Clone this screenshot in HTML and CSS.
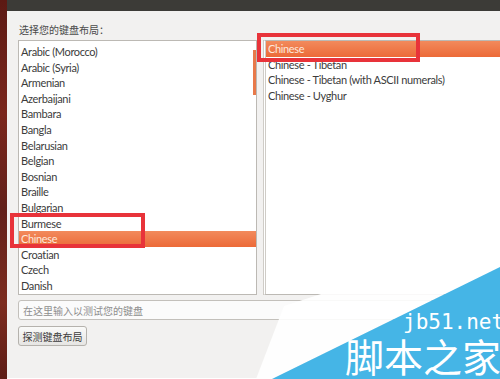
FILE: index.html
```html
<!DOCTYPE html>
<html lang="zh-CN">
<head>
    <meta charset="UTF-8">
    <title>键盘布局</title>
    <link rel="stylesheet" href="styles.css">
</head>
<body>
    <div class="screen">
        <div class="strip"></div>
        <div class="window">
            <div class="titlebar"></div>
            <div class="content">
                <p class="label">选择您的键盘布局：</p>
                <div class="lists">
                    <div class="list list-left">
                        <div class="row">Arabic (Morocco)</div>
                        <div class="row">Arabic (Syria)</div>
                        <div class="row">Armenian</div>
                        <div class="row">Azerbaijani</div>
                        <div class="row">Bambara</div>
                        <div class="row">Bangla</div>
                        <div class="row">Belarusian</div>
                        <div class="row">Belgian</div>
                        <div class="row">Bosnian</div>
                        <div class="row">Braille</div>
                        <div class="row">Bulgarian</div>
                        <div class="row">Burmese</div>
                        <div class="row selected">Chinese</div>
                        <div class="row">Croatian</div>
                        <div class="row">Czech</div>
                        <div class="row">Danish</div>
                        <div class="slider"></div>
                    </div>
                    <div class="list list-right">
                        <div class="row selected">Chinese</div>
                        <div class="row">Chinese - Tibetan</div>
                        <div class="row">Chinese - Tibetan (with ASCII numerals)</div>
                        <div class="row">Chinese - Uyghur</div>
                    </div>
                </div>
                <input class="test-input" type="text" placeholder="在这里输入以测试您的键盘">
                <button class="detect">探测键盘布局</button>
            </div>
        </div>
    </div>

    <!-- annotations drawn over the screenshot -->
    <div class="mark mark-left"></div>
    <div class="mark mark-right"></div>

    <div class="watermark">
        <svg width="500" height="379" viewBox="0 0 500 379">
            <polygon points="284,306 500,236 500,267 272,379 256,379" fill="#ffffff" fill-opacity="0.9"/>
            <polygon points="500,267 500,379 272,379" fill="#45b5e6"/>
        </svg>
        <span class="wm-url">jb51.net</span>
        <span class="wm-name">脚本之家</span>
    </div>
</body>
</html>
```

FILE: styles.css
```css
body {
    margin: 0;
    width: 500px;
    height: 379px;
    overflow: hidden;
    position: relative;
    background-color: #f2f1f0;
    font-family: 'Lato', 'Noto Sans CJK SC', sans-serif;
    color: #3c3c3c;
}

.screen {
    display: flex;
    height: 379px;
}

.strip {
    width: 7px;
    flex-shrink: 0;
    background: linear-gradient(180deg, #5c1a14 0%, #7a261c 30%, #62201a 55%, #7c2c1f 80%, #5e1d16 100%);
}

.window {
    flex: 1;
    display: flex;
    flex-direction: column;
    border-bottom: 1px solid #ffffff;
}

.titlebar {
    height: 11px;
    background-color: #3c3b37;
}

.content {
    padding-left: 11px;
}

.label {
    margin: 11px 0 2px 1px;
    height: 16px;
    line-height: 16px;
    font-size: 10px;
    color: #4a4a4a;
    font-family: 'Noto Sans CJK SC', sans-serif;
}

.lists {
    display: flex;
    gap: 6px;
    width: 520px;
}

.list {
    height: 253px;
    border: 1px solid #bcb9b4;
    background-color: #ffffff;
    font-size: 11px;
    letter-spacing: -0.35px;
}

.list-left {
    width: 237px;
    padding-top: 3px;
    height: 250px;
    position: relative;
    overflow: hidden;
}

.list-right {
    flex: 1;
    border-left: 3px double #cfccc7;
}

.row {
    height: 15.6px;
    line-height: 15.6px;
    padding-left: 2px;
    white-space: nowrap;
}

.row.selected {
    background: linear-gradient(180deg, #f28a5c 0%, #ec6a38 100%);
    color: #fde8dc;
}

.slider {
    position: absolute;
    right: 0;
    top: 9px;
    width: 3px;
    height: 45px;
    background-color: #e8794a;
}

.test-input {
    display: block;
    box-sizing: border-box;
    margin-top: 5px;
    width: 520px;
    height: 20px;
    padding: 0 4px;
    border: 1px solid #c3c0bb;
    border-radius: 3px;
    background-color: #fbfbfb;
    font-family: 'Noto Sans CJK SC', sans-serif;
    font-size: 10px;
}

.test-input::placeholder {
    color: #8e8e8e;
}

.detect {
    display: block;
    box-sizing: border-box;
    margin-top: 6px;
    width: 69px;
    height: 20px;
    padding: 0;
    border: 1px solid #b5b2ad;
    border-radius: 3px;
    background: linear-gradient(180deg, #fafaf9 0%, #e6e5e3 100%);
    font-family: 'Noto Sans CJK SC', sans-serif;
    font-size: 10px;
    color: #3c3c3c;
}

.mark {
    position: absolute;
    border: 4px solid #e8333a;
    box-sizing: border-box;
}

.mark-left {
    left: 10px;
    top: 213px;
    width: 135px;
    height: 35px;
}

.mark-right {
    left: 257px;
    top: 33px;
    width: 163px;
    height: 29px;
}

.watermark {
    position: absolute;
    left: 0;
    top: 0;
    width: 500px;
    height: 379px;
    pointer-events: none;
}

.watermark svg {
    display: block;
}

.wm-url {
    position: absolute;
    left: 403px;
    top: 312px;
    font-family: 'DejaVu Sans Mono', monospace;
    font-size: 21px;
    line-height: 21px;
    color: #ffffff;
    white-space: nowrap;
}

.wm-name {
    position: absolute;
    left: 345px;
    top: 335px;
    font-family: 'Noto Sans CJK SC', sans-serif;
    font-size: 39px;
    line-height: 40px;
    color: #ffffff;
    white-space: nowrap;
}
```
